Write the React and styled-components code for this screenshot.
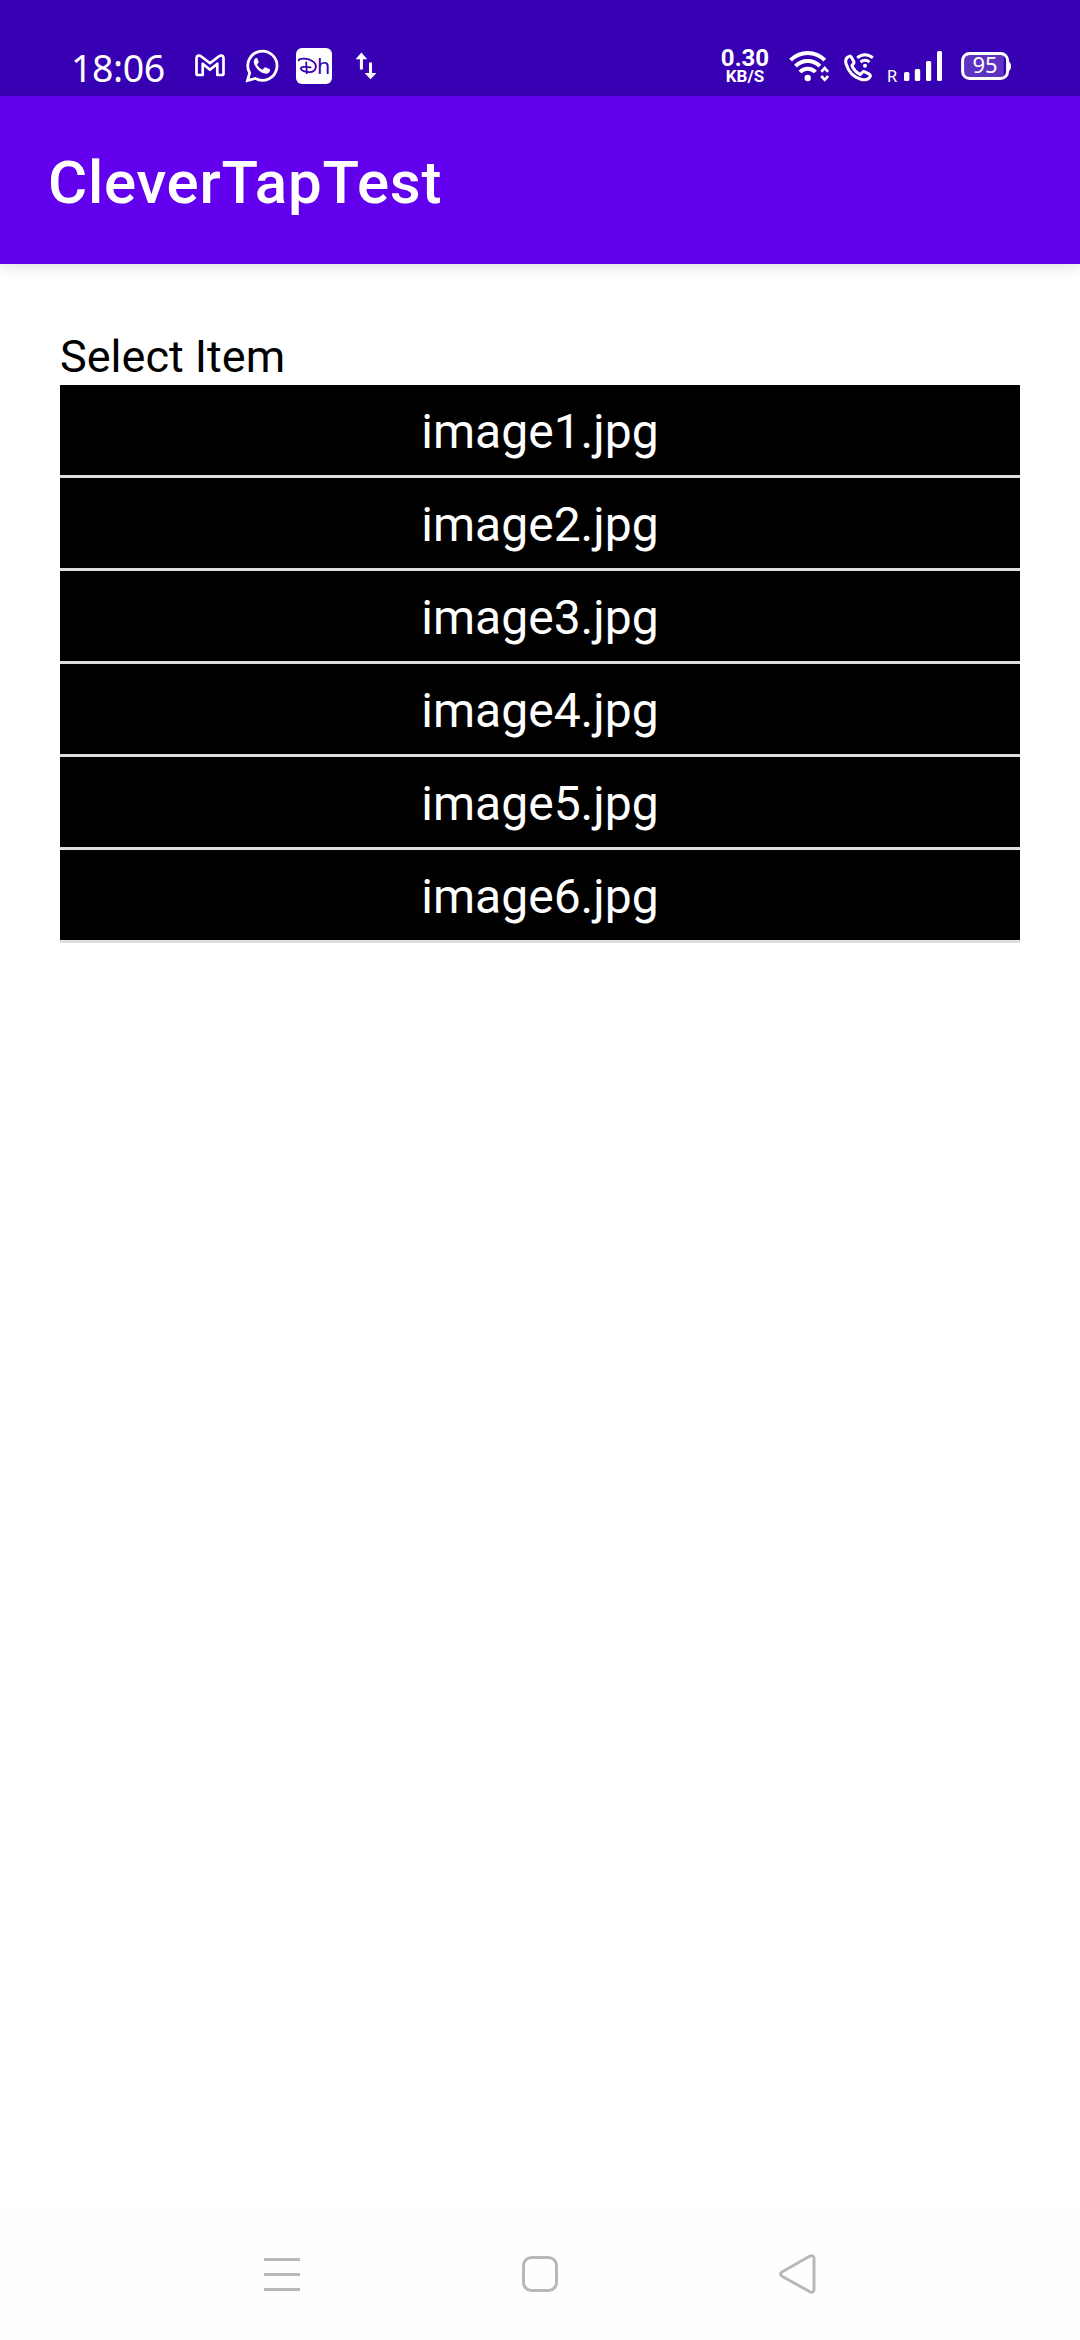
import React from "react";
import styled, { createGlobalStyle } from "styled-components";

const GlobalStyle = createGlobalStyle`
  *, *::before, *::after { box-sizing: border-box; }
  html, body { margin: 0; padding: 0; background: #fefefe; }
  body { font-family: Roboto, "Noto Sans", sans-serif; }
`;

const Screen = styled.div`
  display: flex;
  flex-direction: column;
  width: 1080px;
  height: 2340px;
  background: #fefefe;
  overflow: hidden;
`;

const StatusBar = styled.header`
  display: flex;
  justify-content: space-between;
  flex: none;
  height: 96px;
  padding: 0 67px 0 71px;
  background: #3700b3;
  color: #fff;
`;

const StatusGroup = styled.div`
  display: flex;
  align-items: flex-start;
`;

const Clock = styled.time`
  width: 122px;
  padding-top: 46px;
  font: 400 37.5px/44px "Noto Sans", sans-serif;
  letter-spacing: -0.4px;
  white-space: nowrap;
`;

const Icon = styled.svg`
  display: block;
  flex: none;
  width: ${(p) => p.$w}px;
  height: 96px;
  margin-right: ${(p) => p.$gap || 0}px;
  fill: none;
  stroke: #fff;
`;

const Speed = styled.div`
  display: flex;
  flex-direction: column;
  align-items: center;
  width: 50px;
  margin-right: 19px;
  padding-top: 47px;
  font-weight: 700;
`;

const SpeedValue = styled.span`
  font-size: 24px;
  line-height: 22px;
`;

const SpeedUnit = styled.span`
  font-size: 17px;
  line-height: 15px;
`;

const AppBar = styled.div`
  display: flex;
  align-items: center;
  flex: none;
  height: 168px;
  padding: 5px 48px 0;
  background: #6200ee;
  color: #fff;
  box-shadow: 0 2px 14px rgba(0, 0, 0, 0.14);
  z-index: 1;
`;

const Title = styled.h1`
  margin: 0;
  font-size: 60px;
  font-weight: 500;
  line-height: 70px;
  letter-spacing: 0.75px;
`;

const Content = styled.main`
  flex: 1;
  padding: 60px 60px 0;
  background: #fff;
`;

const Label = styled.h2`
  margin: 0;
  height: 61px;
  padding-top: 5px;
  font-size: 45px;
  font-weight: 400;
  line-height: 56px;
  color: #000;
`;

const ItemList = styled.ul`
  margin: 0;
  padding: 0;
  list-style: none;
`;

const Item = styled.li`
  height: 93px;
  border-bottom: 3px solid #dedede;
  background: #000;
  color: #fff;
  font-size: 48px;
  line-height: 94px;
  text-align: center;
`;

const NavBar = styled.nav`
  display: flex;
  align-items: center;
  justify-content: space-between;
  flex: none;
  height: 132px;
  padding: 0 264px;
`;

const NavIcon = styled.svg`
  display: block;
  width: 40px;
  height: 44px;
  margin: 0 -2px;
  fill: none;
  stroke: #b8b8b8;
  stroke-width: 3;
  stroke-linejoin: round;
`;

const items = ["image1.jpg", "image2.jpg", "image3.jpg", "image4.jpg", "image5.jpg", "image6.jpg"];

const GmailIcon = () => (
  <Icon $w={36} $gap={13} viewBox="193 0 36 96">
    <path
      strokeWidth="2.7"
      strokeLinejoin="round"
      d="M196.5 58.5Q196.5 55.5 199 55.5Q200.2 55.5 201 56.2L210 63.2L219 56.2Q219.8 55.5 221 55.5Q223.5 55.5 223.5 58.5V73.5Q223.5 75 222 75H217.3V63.7L210 69.8L202.7 63.7V75H198Q196.5 75 196.5 73.5Z"
    />
  </Icon>
);

const WhatsAppIcon = () => (
  <Icon $w={40} $gap={12} viewBox="242 0 40 96">
    <path strokeWidth="2.8" d="M247.5 80.5L249.7 72.9A14.6 14.6 0 1 1 255.2 78.4Z" />
    <path
      fill="#fff"
      stroke="none"
      d="M257.2 58.1C256.5 57.8 255.7 58 255.1 58.6C253.6 60.2 253.3 62.4 254.6 64.9C257 69.6 260.7 72.6 264.6 73.6C267 74.2 269.2 73.1 269.9 71.1C270.2 70 270.1 69.5 269.4 69.1L265.9 67.4C265.2 67.1 264.7 67.3 264.3 67.8L263.1 69.3C262.7 69.7 262.3 69.7 261.8 69.4C259.9 68.4 258.4 67 257.3 65.1C257 64.6 257.2 64.3 257.6 63.8L258.5 62.7C258.8 62.2 258.8 61.9 258.6 61.4Z"
    />
  </Icon>
);

const DisneyIcon = () => (
  <Icon $w={40} $gap={18} viewBox="294 0 40 96">
    <rect x="296" y="48" width="36" height="36" rx="6" fill="#fff" stroke="none" />
    <g stroke="#3700b3" strokeWidth="1.8" strokeLinecap="round">
      <path d="M298.7 60.4C299.6 58 308 58 312.6 61.2C318 65 316.5 71.8 309.5 72.2C305.5 72.4 301 70.4 300.8 68.6C300.8 66.8 306 66.4 310.6 67.4" />
      <path d="M306.2 62.4L306.8 73.2" />
    </g>
    <text x="317" y="74" fontFamily="Noto Sans, sans-serif" fontSize="21.5" fill="#3700b3" stroke="none">h</text>
  </Icon>
);

const TransferIcon = () => (
  <Icon $w={26} viewBox="352 0 26 96">
    <path strokeWidth="3" d="M361.4 69.5V57M370.5 62.5V75" />
    <path fill="#fff" stroke="none" d="M361.4 52.6L367.2 59.2H355.6ZM370.5 79.3L364.6 73H376.4Z" />
  </Icon>
);

const WifiIcon = () => (
  <Icon $w={42} $gap={12} viewBox="789 0 42 96">
    <g strokeWidth="4">
      <path d="M790.6 60.2A24 24 0 0 1 824.8 60.2" />
      <path d="M795.5 66.2A17 17 0 0 1 819.9 66.2" />
      <path d="M800 72A10.5 10.5 0 0 1 815.4 72" />
    </g>
    <circle cx="807.7" cy="78" r="3.2" fill="#fff" stroke="none" />
    <path strokeWidth="2.7" d="M821.3 71.8L824.7 68L828.1 71.8M821.3 76L824.7 79.8L828.1 76" />
  </Icon>
);

const CallIcon = () => (
  <Icon $w={34} $gap={10} viewBox="843 0 34 96">
    <path
      strokeWidth="3"
      strokeLinejoin="round"
      d="M849.2 56.3C846.3 57.3 845 60.2 846.2 64.2C848.5 71.6 854 77.2 860.7 79.2C865 80.4 868.8 79.4 870.1 76.7C870.6 75.6 870.3 74.8 869.4 74.2L864.8 71.8C864 71.4 863.1 71.5 862.5 72.2L860.3 74.6C856.6 72.8 853.4 69.4 851.9 65.4L853.7 63.3C854.2 62.5 854.1 61.9 853.7 61.2L851.2 57Q850.5 55.8 849.2 56.3Z"
    />
    <path strokeWidth="3" d="M857.2 57.9A11.3 11.3 0 0 1 872.8 57.9M860.6 62.1A6.4 6.4 0 0 1 869.4 62.1" />
    <circle cx="865" cy="65.7" r="2" fill="#fff" stroke="none" />
  </Icon>
);

const SignalIcon = () => (
  <Icon $w={58} $gap={14} viewBox="887 0 58 96">
    <text x="886.8" y="81.7" fontFamily="Noto Sans, sans-serif" fontSize="17" fill="#fff" stroke="none">R</text>
    <g fill="#fff" stroke="none">
      <rect x="904" y="72" width="5.4" height="9" rx="1.5" />
      <rect x="914.8" y="69" width="5.4" height="12" rx="1.5" />
      <rect x="926" y="61" width="5.2" height="20" rx="1.5" />
      <rect x="937" y="51" width="5" height="30" rx="1.5" />
    </g>
  </Icon>
);

const BatteryIcon = () => (
  <Icon $w={54} viewBox="959 0 54 96">
    <path d="M969 53.5H1003.7V78.5H969Q962.5 78.5 962.5 72V60Q962.5 53.5 969 53.5Z" fill="#fff" fillOpacity=".2" stroke="none" />
    <rect x="962.6" y="53.5" width="45" height="25" rx="7" strokeWidth="3" />
    <path d="M1008.5 61.5Q1011 62.5 1011 66.2Q1011 70 1008.5 71Z" fill="#fff" stroke="none" />
    <text x="985" y="73.3" textAnchor="middle" fontFamily="Noto Sans, sans-serif" fontSize="22" fill="#fff" stroke="none">95</text>
  </Icon>
);

export default function App() {
  return (
    <>
      <GlobalStyle />
      <Screen>
        <StatusBar>
          <StatusGroup>
            <Clock>18:06</Clock>
            <GmailIcon />
            <WhatsAppIcon />
            <DisneyIcon />
            <TransferIcon />
          </StatusGroup>
          <StatusGroup>
            <Speed>
              <SpeedValue>0.30</SpeedValue>
              <SpeedUnit>KB/S</SpeedUnit>
            </Speed>
            <WifiIcon />
            <CallIcon />
            <SignalIcon />
            <BatteryIcon />
          </StatusGroup>
        </StatusBar>
        <AppBar>
          <Title>CleverTapTest</Title>
        </AppBar>
        <Content>
          <Label>Select Item</Label>
          <ItemList>
            {items.map((name) => (
              <Item key={name}>{name}</Item>
            ))}
          </ItemList>
        </Content>
        <NavBar>
          <NavIcon viewBox="262 2252 40 44">
            <path d="M264 2259.5H300M264 2274.5H300M264 2289.5H300" />
          </NavIcon>
          <NavIcon viewBox="520 2252 40 44">
            <rect x="523.5" y="2257.5" width="33" height="33" rx="8" />
          </NavIcon>
          <NavIcon viewBox="776 2252 40 44">
            <path d="M780 2272L807 2256.5Q812 2254.3 812 2258.5V2289.5Q812 2293.7 807 2291.3L780 2276.2Q777 2274 780 2272Z" />
          </NavIcon>
        </NavBar>
      </Screen>
    </>
  );
}
